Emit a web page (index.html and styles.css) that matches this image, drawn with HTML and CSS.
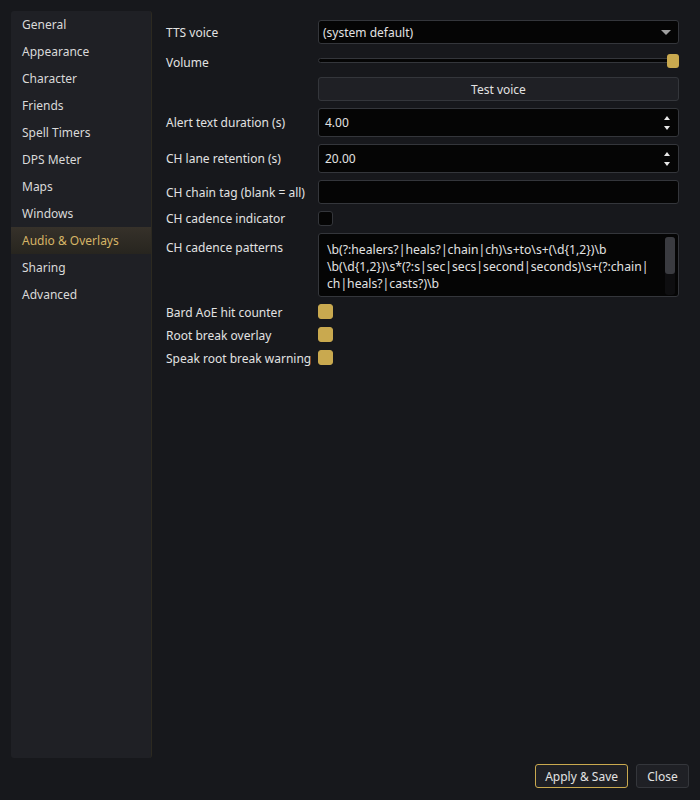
FILE: index.html
```html
<!DOCTYPE html>
<html lang="en">
<head>
    <meta name="viewport" content="width=device-width,initial-scale=1.0">
    <title>Settings</title>
    <link rel="stylesheet" href="styles.css">
</head>

<body>
    <div class="dialog">
        <div class="main">
            <ul class="nav">
                <li>General</li>
                <li>Appearance</li>
                <li>Character</li>
                <li>Friends</li>
                <li>Spell Timers</li>
                <li>DPS Meter</li>
                <li>Maps</li>
                <li>Windows</li>
                <li class="selected">Audio &amp; Overlays</li>
                <li>Sharing</li>
                <li>Advanced</li>
            </ul>

            <div class="form">
                <div class="row">
                    <span class="label">TTS voice</span>
                    <div class="combo">
                        <span>(system default)</span>
                        <span class="arrow"></span>
                    </div>
                </div>

                <div class="row slider-row">
                    <span class="label">Volume</span>
                    <div class="slider">
                        <div class="groove"></div>
                        <div class="handle"></div>
                    </div>
                </div>

                <div class="row">
                    <span class="label"></span>
                    <button class="button wide">Test voice</button>
                </div>

                <div class="row">
                    <span class="label">Alert text duration (s)</span>
                    <div class="spin">
                        <span>4.00</span>
                        <span class="spin-arrows"><i class="up"></i><i class="down"></i></span>
                    </div>
                </div>

                <div class="row">
                    <span class="label">CH lane retention (s)</span>
                    <div class="spin">
                        <span>20.00</span>
                        <span class="spin-arrows"><i class="up"></i><i class="down"></i></span>
                    </div>
                </div>

                <div class="row">
                    <span class="label">CH chain tag (blank = all)</span>
                    <div class="line-edit"></div>
                </div>

                <div class="row single-check">
                    <span class="label">CH cadence indicator</span>
                    <span class="check"></span>
                </div>

                <div class="row top">
                    <span class="label">CH cadence patterns</span>
                    <div class="text-edit">
                        <div class="text-lines">
                            <div>\b(?:healers?|heals?|chain|ch)\s+to\s+(\d{1,2})\b</div>
                            <div>\b(\d{1,2})\s*(?:s|sec|secs|second|seconds)\s+(?:chain|</div>
                            <div>ch|heals?|casts?)\b</div>
                        </div>
                        <div class="scrollbar"><div class="thumb"></div></div>
                    </div>
                </div>

                <div class="row check-row">
                    <span class="label">Bard AoE hit counter</span>
                    <span class="check on"></span>
                </div>

                <div class="row check-row">
                    <span class="label">Root break overlay</span>
                    <span class="check on"></span>
                </div>

                <div class="row check-row">
                    <span class="label">Speak root break warning</span>
                    <span class="check on"></span>
                </div>
            </div>
        </div>

        <div class="footer">
            <button class="button default">Apply &amp; Save</button>
            <button class="button close">Close</button>
        </div>
    </div>
</body>

</html>
```

FILE: styles.css
```css
html {
    box-sizing: border-box;
}

*,
*:before,
*:after {
    box-sizing: inherit;
}

:root {
    --window: #17181c;
    --panel: #1f2025;
    --field: #050505;
    --border: #34363b;
    --text: #e2e2e2;
    --gold: #c9a94f;
    --gold-text: #d6b466;
}

body {
    margin: 0;
    width: 700px;
    height: 800px;
    background: var(--window);
    color: var(--text);
    font-family: "Noto Sans", "Open Sans", sans-serif;
    font-size: 12px;
}

.dialog {
    height: 100%;
    display: flex;
    flex-direction: column;
    padding: 11px 11px 12px 11px;
}

.main {
    flex: 1;
    display: flex;
    gap: 14px;
}

.nav {
    list-style: none;
    margin: 0;
    padding: 0;
    width: 141px;
    height: 747px;
    background: var(--panel);
    border-right: 1px solid #2c2920;
    border-radius: 3px;
}

.nav li {
    height: 27px;
    line-height: 27px;
    padding-left: 11px;
    color: #d9d9d9;
}

.nav li.selected {
    background: linear-gradient(to bottom, #36312a 0%, #27251f 100%);
    color: var(--gold-text);
}

.form {
    flex: 1;
    display: flex;
    flex-direction: column;
    gap: 7px;
    padding-top: 9px;
    padding-right: 10px;
}

.row {
    display: flex;
    align-items: center;
}

.row.top {
    align-items: flex-start;
}

.row.top .label {
    padding-top: 6px;
}

.label {
    width: 152px;
    flex-shrink: 0;
    white-space: nowrap;
}

.combo,
.spin,
.line-edit,
.text-edit {
    flex: 1;
    background: var(--field);
    border: 1px solid var(--border);
    border-radius: 3px;
}

.combo {
    height: 24px;
    display: flex;
    align-items: center;
    justify-content: space-between;
    padding: 0 7px 0 4px;
}

.arrow {
    width: 0;
    height: 0;
    border-left: 5px solid transparent;
    border-right: 5px solid transparent;
    border-top: 5px solid #a0a0a0;
}

.slider-row {
    height: 16px;
    margin-top: 3px;
}

.slider {
    flex: 1;
    position: relative;
    height: 16px;
}

.groove {
    position: absolute;
    left: 0;
    right: 6px;
    top: 4px;
    height: 5px;
    background: var(--field);
    border: 1px solid var(--border);
    border-radius: 3px;
}

.handle {
    position: absolute;
    right: 0;
    top: 0;
    width: 12px;
    height: 14px;
    background: var(--gold);
    border-radius: 3px;
}

.button {
    font: inherit;
    color: var(--text);
    background: var(--panel);
    border: 1px solid var(--border);
    border-radius: 3px;
    height: 24px;
    padding: 0 9px;
}

.button.wide {
    flex: 1;
}

.button.default {
    border-color: var(--gold);
}

.button.close {
    min-width: 53px;
}

.spin {
    height: 29px;
    display: flex;
    align-items: center;
    justify-content: space-between;
    padding: 0 8px 0 6px;
}

.spin-arrows {
    display: flex;
    flex-direction: column;
    gap: 6px;
}

.spin-arrows i {
    width: 0;
    height: 0;
    border-left: 3px solid transparent;
    border-right: 3px solid transparent;
}

.spin-arrows .up {
    border-bottom: 4px solid #e8e8e8;
}

.spin-arrows .down {
    border-top: 4px solid #e8e8e8;
}

.line-edit {
    height: 24px;
}

.check {
    width: 15px;
    height: 15px;
    background: var(--field);
    border: 1px solid var(--border);
    border-radius: 3px;
}

.check.on {
    background: var(--gold);
    border-color: var(--gold);
}

.single-check {
    height: 15px;
}

.check-row {
    height: 16px;
    align-items: flex-start;
}

.text-edit {
    height: 64px;
    display: flex;
    justify-content: space-between;
    padding: 3px 3px 1px 8px;
}

.text-lines {
    font-size: 12.2px;
    line-height: 17px;
    padding-top: 4px;
    white-space: nowrap;
}

.scrollbar {
    width: 10px;
    height: 58px;
    background: #0e0e10;
    border-radius: 3px;
}

.scrollbar .thumb {
    height: 37px;
    background: #3a3b40;
    border-radius: 3px;
}

.footer {
    display: flex;
    justify-content: flex-end;
    gap: 8px;
    padding-top: 6px;
}
```
